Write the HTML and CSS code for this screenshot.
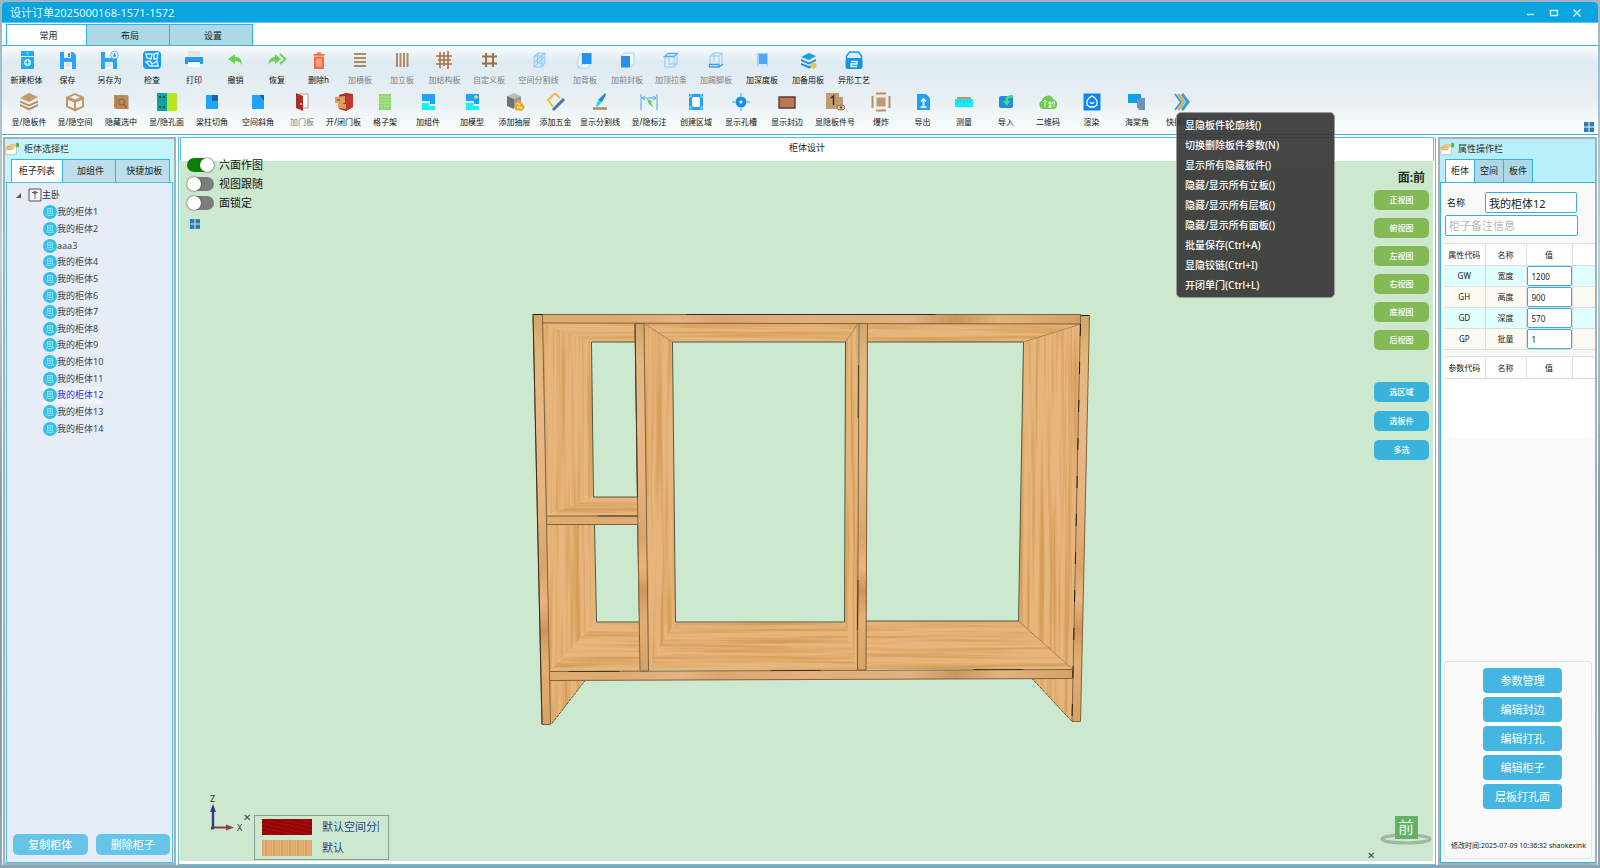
FILE: index.html
```html
<!DOCTYPE html>
<html lang="zh-CN">
<head>
<meta charset="utf-8">
<title>设计订单2025000168-1571-1572</title>
<link rel="stylesheet" href="styles.css">
</head>
<body>
<svg class="defs" aria-hidden="true">
  <defs>
    <symbol id="cab" viewBox="0 0 14 14"><circle cx="7" cy="7" r="7" fill="#35bfe8"/><path d="M4.500 3.500h5v5h-5zM4.500 6h5M7 3.500v5M4.500 8.500l-1 2.500M9.500 8.500l1 2.500M5 10.500h4" fill="none" stroke="#9fe6f9" stroke-width=".8"/></symbol>
    <symbol id="tiles" viewBox="0 0 10 10"><path d="M0 0h4.500v4.500H0zM5.500 0H10v4.500H5.500zM0 5.500h4.500V10H0zM5.500 5.500H10V10H5.500z" fill="#2a7db8"/></symbol>
    <symbol id="note" viewBox="0 0 16 14"><path d="M1 4h11v9H1z" fill="#fff" stroke="#b9c4cc"/><path d="M0 5l5-3 7-1 2 2-3 1-2 3-4 1-5 0z" fill="#efc98c"/><path d="M1 6l6-2M2 8l7-1" stroke="#d9a862" fill="none"/><path d="M12 0l3 1v4h-3z" fill="#47b64c"/></symbol>
  </defs>
</svg>
<div class="window">
  <header class="titlebar">
    <h1>设计订单2025000168-1571-1572</h1>
    <div class="winctl">
      <button aria-label="最小化"><svg viewBox="0 0 10 10"><path d="M1 6.500h7" stroke="#cdeffc" stroke-width="1.500"/></svg></button>
      <button aria-label="最大化"><svg viewBox="0 0 10 10"><path d="M1.500 2.500h7v5h-7z" fill="none" stroke="#cdeffc" stroke-width="1.500"/></svg></button>
      <button aria-label="关闭"><svg viewBox="0 0 10 10"><path d="M1.500 1.500l7 7M8.500 1.500l-7 7" stroke="#cdeffc" stroke-width="1.500"/></svg></button>
    </div>
  </header>
  <nav class="maintabs">
    <button class="on">常用</button><button>布局</button><button>设置</button>
  </nav>
  <section class="ribbon">
    <div class="tools tools-a">
      <button><svg viewBox="0 0 20 20"><path d="M4 1h13v5H4zM4 7h13v12H4z" fill="#1badf8"/><circle cx="10.500" cy="12.500" r="3.500" fill="#c9ecfe"/><path d="M8.500 12.500h4M10.500 10.500v4" stroke="#1badf8"/><path d="M10.500 2v2" stroke="#fff"/></svg>新建柜体</button>
      <button><svg viewBox="0 0 20 20"><path d="M2 2h13l3 3v14H2z" fill="#2aa4f7"/><path d="M6 2h7v6H6zM6 12h8v7H6z" fill="#eef6fb"/><path d="M10 3h2v4h-2z" fill="#2aa4f7"/><path d="M7.500 14h5M7.500 16h5" stroke="#c6d3dc"/></svg>保存</button>
      <button><svg viewBox="0 0 20 20"><path d="M1 2h13l3 3v14H1z" fill="#2aa4f7"/><path d="M5 2h6v6H5zM5 12h8v7H5z" fill="#eef6fb"/><path d="M6.500 14h5M6.500 16h5" stroke="#c6d3dc"/><circle cx="14.500" cy="5" r="3.800" fill="#e7f4fd" stroke="#6bbcf4"/><path d="M14.500 3v4M13 5l1.500 2L16 5" fill="none" stroke="#2aa4f7"/></svg>另存为</button>
      <button><svg viewBox="0 0 20 20"><rect x="1" y="1" width="18" height="18" rx="4" fill="#129dfc"/><path d="M4 4h6l-1 5-4-1zM12 4l4-1-1 6h-3zM4 12l4 4h8l-1-5-5 3-2-3z" fill="none" stroke="#e4f5ff" stroke-width="1.400"/></svg>检查</button>
      <button><svg viewBox="0 0 20 20"><path d="M4 1h12v5H4z" fill="#dfe5ea"/><path d="M1 7h18v7H1z" fill="#2a9bf3"/><path d="M4 12h12v5H4z" fill="#f9fbfd"/><path d="M4 11.500h12" stroke="#1a82d6"/></svg>打印</button>
      <button><svg viewBox="0 0 20 20"><path d="M2 9l7-5v3c5 0 7 3 7 8-2-3-4-4-7-4v3z" fill="#6ccf4e"/></svg>撤销</button>
      <button><svg viewBox="0 0 20 20"><path d="M14 9L8 4v3c-4 0-6 3-7 8 2-3 4-4 7-4v3z" fill="#6ccf4e"/><path d="M13 4l5.500 5-5.500 5" fill="none" stroke="#6ccf4e" stroke-width="1.800"/></svg>恢复</button>
      <button><svg viewBox="0 0 20 20"><path d="M5 6.500h10V19H5zM4.500 4h11v1.800h-11zM8 2.500h4v2H8z" fill="#f8693c"/><path d="M8 8.500v8M10 8.500v8M12 8.500v8" stroke="#fbd5c8"/></svg>删除h</button>
      <button class="dim"><svg viewBox="0 0 20 20"><path d="M4 4h12M4 8h12M4 12h12M4 16h12" stroke="#b48a62" stroke-width="2"/></svg>加横板</button>
      <button class="dim"><svg viewBox="0 0 20 20"><path d="M5 3v14M8.500 3v14M12 3v14M15.500 3v14" stroke="#b48a62" stroke-width="2"/></svg>加立板</button>
      <button class="dim"><svg viewBox="0 0 20 20"><path d="M5 2v16M9 2v14M13 1v18M1 6h16M3 10h13M1 14h16" stroke="#a9713f" stroke-width="1.600"/></svg>加结构板</button>
      <button class="dim"><svg viewBox="0 0 20 20"><path d="M7 3v14M14 3v14M3 6.500h15M3 13.500h15" stroke="#a0703f" stroke-width="2"/></svg>自定义板</button>
      <button class="dim"><svg viewBox="0 0 20 20"><path d="M5 6l4-3h7v10l-3 4H5zM5 6h8v11M13 6l3-3M5 13l8-7M6 16l9-9M9 3l-1 10h8" fill="#cfe7fa" stroke="#8cc8f5"/></svg>空间分割线</button>
      <button class="dim"><svg viewBox="0 0 20 20"><path d="M3 7l4-4v11l-4 4zM3 18h9l4-4" fill="#f3f9fe" stroke="#a9d3f5"/><path d="M7 3h9.500v11H7z" fill="#2590f0"/></svg>加背板</button>
      <button class="dim"><svg viewBox="0 0 20 20"><path d="M4 6l4-3h9v11l-4 3" fill="#f3f9fe" stroke="#a9d3f5"/><path d="M4 6h9v11.500H4z" fill="#2590f0"/></svg>加前封板</button>
      <button class="dim"><svg viewBox="0 0 20 20"><path d="M4 7v10h9V7M8 5v9h8V4M13 17l3-3" fill="none" stroke="#a9d3f5" stroke-width="1.300"/><path d="M3.500 6.500L7 3.500h9.500L13 6.500z" fill="#dff0fd" stroke="#55adf2" stroke-width="1.300"/></svg>加顶拉条</button>
      <button class="dim"><svg viewBox="0 0 20 20"><path d="M4 14V6h9v8M8 12V3h8v11M4 6l4-3M13 6l3-3" fill="none" stroke="#a9d3f5" stroke-width="1.300"/><path d="M3.500 14.500h9.500v2.500H3.500zM13 17l4-3" fill="#dff0fd" stroke="#3a9ff0" stroke-width="1.300"/></svg>加踢脚板</button>
      <button><svg viewBox="0 0 20 20"><path d="M5 3h11v14H5z" fill="#9fcdf5"/><path d="M7 4h8v10H7z" fill="#4fa6f2"/><path d="M5 17l2-3h8l1 3" fill="#d2e8fb"/></svg>加深度板</button>
      <button><svg viewBox="0 0 20 20"><path d="M3 7l8-4 7 3-7 4z" fill="#11a0ef"/><path d="M3 9v2l8 3.500 7-3.500V9l-7 3.500zM3 13v2l8 3.500 4-2v-2l-4 1.500z" fill="#1b92dc"/><circle cx="15.500" cy="15.500" r="3" fill="#edc14a"/></svg>加备用板</button>
      <button><svg viewBox="0 0 20 20"><path d="M2.500 9v-3l3-4h9l3 4v3" fill="#d8eefb" stroke="#1f9ede" stroke-width="1.600"/><rect x="1.500" y="8" width="17" height="11" rx="2.500" fill="#1694dd"/><path d="M7 11.500h6v2.500H7v2.500h6" fill="none" stroke="#e8f7ff" stroke-width="1.300"/></svg>异形工艺</button>
    </div>
    <div class="tools tools-b">
      <button><svg viewBox="0 0 20 20"><path d="M1 6l9-5 9 4-9 5z" fill="#c39a6c"/><path d="M1 8.500l9 4 9-4v2l-9 4-9-4zM1 12l9 4 9-4v2l-9 4.500L1 14z" fill="#b98c5c"/></svg>显/隐板件</button>
      <button><svg viewBox="0 0 20 20"><path d="M1 5l9-4 9 4v10l-9 4.500L1 15z" fill="#c2986b"/><path d="M3 8l6 2.500v6L3 14zM17 8l-6 2.500v6l6-2.500zM10 3l5 2.200-5 2.300-5-2.300z" fill="#f5f2ee"/></svg>显/隐空间</button>
      <button><svg viewBox="0 0 20 20"><path d="M3 3h13a1.500 1.500 0 0 1 1.500 1.500V17H5a2 2 0 0 1-2-2z" fill="#b98a5a"/><circle cx="10.500" cy="10" r="3" fill="none" stroke="#8a5c2e"/><path d="M12.500 12l3 4" stroke="#8a5c2e" stroke-width="1.200"/><path d="M5.500 4v12" stroke="#a67746"/></svg>隐藏选中</button>
      <button><svg viewBox="0 0 20 20"><path d="M0 1h10v18H0z" fill="#0fa3a0"/><path d="M10 1h10v18H10z" fill="#b6e61d"/><path d="M3 4v2M7 4v2M3 14v2M7 14v2" stroke="#124b4a" stroke-width="2"/></svg>显/隐孔面</button>
      <button><svg viewBox="0 0 20 20"><path d="M4 3h12v14H4z" fill="#1ea2fb"/><path d="M10 3h6v6h-6z" fill="#1467aa"/></svg>梁柱切角</button>
      <button><svg viewBox="0 0 20 20"><path d="M4 3h7l5 6v8H4z" fill="#1ea2fb"/><path d="M11 3h5v6z" fill="#1467aa"/></svg>空间斜角</button>
      <button class="dim"><svg viewBox="0 0 20 20"><path d="M7 2h9v14H7z" fill="#fff" stroke="#d98a84"/><path d="M4 1l7 3v15l-7-3z" fill="#a92e28"/><path d="M9 11v2" stroke="#fff"/></svg>加门板</button>
      <button><svg viewBox="0 0 20 20"><path d="M5 3l7-2 7 1v13l-7 4-7-2z" fill="#b22a22"/><path d="M12 5l7-3v13l-7 4z" fill="#c8372d"/><path d="M1 5l10-1v7l-3 1-7-1zM4 12h8v5l-8-1z" fill="#dd9d63"/><path d="M3 8h3" stroke="#7b3a1e"/></svg>开/闭门板</button>
      <button><svg viewBox="0 0 20 20"><path d="M4 2h12v16H4z" fill="#86d263"/><path d="M7 2v16M10 2v16M13 2v16M4 5h12M4 8h12M4 11h12M4 14h12" stroke="#a9e38e"/></svg>格子架</button>
      <button><svg viewBox="0 0 20 20"><path d="M4 2h13v10h-5V9H4z" fill="#1ea2fb"/><path d="M4 11h7v3h6v4H4z" fill="#16f0fb"/></svg>加组件</button>
      <button><svg viewBox="0 0 20 20"><path d="M4 2h13v10h-5V9H4z" fill="#1ea2fb"/><path d="M4 11h7v3h6v4H4z" fill="#16f0fb"/><circle cx="14" cy="5" r="1.800" fill="#f2e42d"/></svg>加模型</button>
      <button><svg viewBox="0 0 20 20"><path d="M2 4l7-3 7 3-7 3z" fill="#bdbdbd"/><path d="M2 4l7 3v10l-7-3z" fill="#707070"/><path d="M9 7l7-3v9l-7 3z" fill="#999"/><path d="M10 10l4-2 6 7-3 4-7-1z" fill="#eda62b"/><path d="M12 11l3 2M12 15l5 1" stroke="#fff0b8" stroke-width="1.400"/></svg>添加抽屉</button>
      <button><svg viewBox="0 0 20 20"><path d="M14 6L9 1.500 2 8l5 7" fill="none" stroke="#f1bd35" stroke-width="2"/><path d="M7 18L18 7" stroke="#4579a6" stroke-width="3"/></svg>添加五金</button>
      <button><svg viewBox="0 0 20 20"><path d="M6 14l2-6 4 2-5 5z" fill="#14dff0"/><path d="M8 8l7-7 1 2-4 7z" fill="#2387db"/><path d="M3 16.500h14" stroke="#b38a67" stroke-width="2.500"/></svg>显示分割线</button>
      <button><svg viewBox="0 0 20 20"><path d="M2 2v16M18 2v16M3 6h14M3 6l3-2M3 6l3 2M17 6l-3-2M17 6l-3 2" fill="none" stroke="#45aef2"/><path d="M8 7l5 2-1 2 3 5-5-4-1-2z" fill="#58cf5a"/></svg>显/隐标注</button>
      <button><svg viewBox="0 0 20 20"><path d="M3 2h14v16H3z" fill="#279ff5"/><path d="M7 5h6l1 1v8l-1 1H7l-1-1V6z" fill="#f2f9fe"/><path d="M5 2v3H3M15 2v3h2M5 18v-3H3M15 18v-3h2" fill="none" stroke="#a8dafb"/></svg>创建区域</button>
      <button><svg viewBox="0 0 20 20"><circle cx="10" cy="10" r="5.500" fill="#168fe6"/><circle cx="10" cy="10" r="1.500" fill="#fff"/><path d="M1 10h3M16 10h3M10 1v3M10 16v3" stroke="#4cc8f8" stroke-width="1.400"/></svg>显示孔槽</button>
      <button><svg viewBox="0 0 20 20"><path d="M2 5h16v11H2z" fill="#b87758" stroke="#5b3d30" stroke-width="1.400"/></svg>显示封边</button>
      <button><svg viewBox="0 0 20 20"><path d="M1 1h13v4h4v12H1z" fill="#c09b6d"/><path d="M6 6l2.500-2v9" fill="none" stroke="#3c2d1f" stroke-width="1.500"/><ellipse cx="16" cy="15.500" rx="4" ry="2.600" fill="#d9c5ab" stroke="#8d6c4c"/><circle cx="16" cy="15.500" r="1.200" fill="#6d5138"/></svg>显隐板件号</button>
      <button><svg viewBox="0 0 20 20"><path d="M5.500 5.500h9v9h-9z" fill="#c09b6d"/><path d="M5 1.500h10M5 18.500h10M1.500 4v12M18.500 4v12" stroke="#b98e60" stroke-width="2"/></svg>爆炸</button>
      <button><svg viewBox="0 0 20 20"><path d="M4 2h9l4 4v12H4z" fill="#1e9ff8"/><path d="M10.500 14V7M8 9.500L10.500 7 13 9.500M7.500 15h6" fill="none" stroke="#fff" stroke-width="1.600"/></svg>导出</button>
      <button><svg viewBox="0 0 20 20"><path d="M3 5h14v3H3z" fill="#bd9468"/><path d="M1 7h18v8H1z" fill="#16ecf8"/><path d="M4 8v3M7 8v2M10 8v3M13 8v2M16 8v3" stroke="#0ebfd6"/></svg>测量</button>
      <button><svg viewBox="0 0 20 20"><rect x="3" y="4" width="14" height="12" rx="2" fill="#1e8fe6"/><path d="M17 3c-6 0-8 2-7 6H7l4 5 3-5h-2c-1-3 1-4 5-3z" fill="#48e16c"/></svg>导入</button>
      <button><svg viewBox="0 0 20 20"><path d="M5 17a4.500 4.500 0 0 1-1-8.500A6 6 0 0 1 15.500 7.500 5 5 0 0 1 16 17z" fill="#6ccb4f"/><path d="M7 15V8M5 10l2-2 2 2M11 10h2v2h-2zM14.500 10h2v2h-2zM11 13.500h2v2h-2zM15 14h2" fill="none" stroke="#e9f9e4"/></svg>二维码</button>
      <button><svg viewBox="0 0 20 20"><path d="M1.500 1.500h17v17h-17z" fill="#0a84fb"/><path d="M7 6l3-2 3 2 2 3v4l-3 2H8l-3-2V9z" fill="none" stroke="#fff" stroke-width="1.300"/><path d="M8 10c1 2 3 2 4 0" fill="none" stroke="#fff" stroke-width="1.300"/></svg>渲染</button>
      <button><svg viewBox="0 0 20 20"><path d="M1 2h13v9H1z" fill="#0aa1ea"/><path d="M10 6h8v12h-6l-2-3z" fill="#6f92c3"/></svg>海棠角</button>
      <button><svg viewBox="0 0 20 20"><path d="M3 2l6 8-6 8" fill="none" stroke="#2aa2f5" stroke-width="2"/><path d="M6 2l6 8-6 8" fill="none" stroke="#e6ac43" stroke-width="2.500"/><path d="M10 2l6 8-6 8" fill="none" stroke="#2aa2f5" stroke-width="3"/></svg>快捷功能</button>
    </div>
    <button class="ribbon-more" aria-label="布局"><svg><use href="#tiles"/></svg></button>
    <menu class="popup">
      <li><button>显隐板件轮廓线()</button></li>
      <li><button>切换删除板件参数(N)</button></li>
      <li><button>显示所有隐藏板件()</button></li>
      <li><button>隐藏/显示所有立板()</button></li>
      <li><button>隐藏/显示所有层板()</button></li>
      <li><button>隐藏/显示所有面板()</button></li>
      <li><button>批量保存(Ctrl+A)</button></li>
      <li><button>显隐铰链(Ctrl+I)</button></li>
      <li><button>开闭单门(Ctrl+L)</button></li>
    </menu>
  </section>
  <main class="work">
    <aside class="panel left">
      <h2 class="panel-title"><svg><use href="#note"/></svg>柜体选择栏</h2>
      <nav class="subtabs"><button class="on">柜子列表</button><button>加组件</button><button>快捷加板</button></nav>
      <div class="left-body">
        <div class="tree-root"><svg class="caret" viewBox="0 0 6 6"><path d="M6 0v6H0z" fill="#555"/></svg><svg class="room" viewBox="0 0 14 14"><path d="M1 1h12v12H1z" fill="#f3f3f3" stroke="#555"/><circle cx="7" cy="4.500" r="1.800" fill="#777"/><path d="M7 4v7M4 4.500h6" stroke="#666"/></svg>主卧</div>
        <ul class="tree">
          <li><svg><use href="#cab"/></svg>我的柜体1</li>
          <li><svg><use href="#cab"/></svg>我的柜体2</li>
          <li><svg><use href="#cab"/></svg>aaa3</li>
          <li><svg><use href="#cab"/></svg>我的柜体4</li>
          <li><svg><use href="#cab"/></svg>我的柜体5</li>
          <li><svg><use href="#cab"/></svg>我的柜体6</li>
          <li><svg><use href="#cab"/></svg>我的柜体7</li>
          <li><svg><use href="#cab"/></svg>我的柜体8</li>
          <li><svg><use href="#cab"/></svg>我的柜体9</li>
          <li><svg><use href="#cab"/></svg>我的柜体10</li>
          <li><svg><use href="#cab"/></svg>我的柜体11</li>
          <li class="sel"><svg><use href="#cab"/></svg>我的柜体12</li>
          <li><svg><use href="#cab"/></svg>我的柜体13</li>
          <li><svg><use href="#cab"/></svg>我的柜体14</li>
        </ul>
        <div class="left-actions"><button>复制柜体</button><button>删除柜子</button></div>
      </div>
    </aside>
    <section class="center">
      <h2 class="center-title">柜体设计</h2>
      <div class="canvas">
        <svg class="scene" viewBox="180 161 1252 700" role="img" aria-label="柜体">
          <defs>
            <filter id="grainV" x="0" y="0" width="1" height="1"><feTurbulence type="fractalNoise" baseFrequency="0.25 0.006" numOctaves="3" seed="4"/><feColorMatrix values="0 0 0 0 .66  0 0 0 0 .34  0 0 0 0 .1  3 0 0 0 -1.250"/><feComposite in2="SourceGraphic" operator="in"/><feMerge><feMergeNode in="SourceGraphic"/><feMergeNode/></feMerge></filter>
            <filter id="grainH" x="0" y="0" width="1" height="1"><feTurbulence type="fractalNoise" baseFrequency="0.006 0.25" numOctaves="3" seed="7"/><feColorMatrix values="0 0 0 0 .66  0 0 0 0 .34  0 0 0 0 .1  3 0 0 0 -1.250"/><feComposite in2="SourceGraphic" operator="in"/><feMerge><feMergeNode in="SourceGraphic"/><feMergeNode/></feMerge></filter>
            <linearGradient id="edgeH"><stop offset="0" stop-color="#dcae6f"/><stop offset=".15" stop-color="#dfaa74"/><stop offset=".25" stop-color="#e6b384"/><stop offset=".33" stop-color="#dba672"/><stop offset=".5" stop-color="#e3b07e"/><stop offset=".58" stop-color="#deb07a"/><stop offset=".68" stop-color="#e3b282"/><stop offset=".77" stop-color="#c99660"/><stop offset=".85" stop-color="#e2b47d"/><stop offset="1" stop-color="#d3a065"/></linearGradient>
            <linearGradient id="edgeV" x2="0" y2="1"><stop offset="0" stop-color="#d3a467"/><stop offset=".1" stop-color="#e0b87b"/><stop offset=".25" stop-color="#e9b787"/><stop offset=".45" stop-color="#e6b482"/><stop offset=".62" stop-color="#d9a56a"/><stop offset=".7" stop-color="#eab67d"/><stop offset=".77" stop-color="#ce955c"/><stop offset=".85" stop-color="#e3af74"/><stop offset="1" stop-color="#d6a266"/></linearGradient>
          </defs>
          <g filter="url(#grainV)" fill="#e8b67c">
            <path d="M542 323L591 341 593 497 545 516zM545 524H594L596 622 549 671zM643 323L672 342 675 622 648 671zM858 323L845 342 844 622 857 670zM1080 324L1023 342 1018 621 1072 669zM549 680H585L551 724zM1031 678H1072L1071 721z"/>
          </g>
          <g filter="url(#grainH)" fill="#e8b67c">
            <path d="M542 323H635V342H591zM593 497H637V516H545zM596 622H639V671H549zM643 323H858L845 342H672zM675 622H844L857 670H648zM867 323H1080L1023 342H867zM865 621H1018L1072 669H865z"/>
          </g>
          <g fill="none" stroke="#9b6e42" stroke-width="1" stroke-opacity=".75">
            <path d="M643 323L672 342M858 323L845 342M1080 324L1023 342M1018 621L1072 669"/>
          </g>
          <g fill="none" stroke="#4f5940" stroke-width="1">
            <path d="M591 342H635L637 497H593zM594 524H637L639 622H596zM672 342H845L844 622H675zM867 342H1023L1018 621H865z"/>
            <path d="M585 680L551 724" stroke-dasharray="3 1"/><path d="M1031 678L1071 721" stroke-dasharray="3 1"/>
          </g>
          <g stroke="#80603b" stroke-width="1">
            <path d="M542 314.500H1080V324L542 323zM549 671.500L1072 669.500V678.500L549 680.500zM545 516H638V524.500H545z" fill="url(#edgeH)"/>
            <path d="M532.500 314.500H542L550 724.500H541.500z" fill="url(#edgeV)"/>
            <path d="M634.500 323.500H643.500L648 671H639.500z" fill="url(#edgeV)"/>
            <path d="M858.500 323.500H867L865.500 670H857z" fill="url(#edgeV)"/>
            <path d="M1080 315.500H1089L1080 721.500H1071.500z" fill="url(#edgeV)"/>
          </g>
          <g fill="none" stroke="#20221a" stroke-width="1">
            <path d="M686 314.500H935M532.500 316L541.500 724" stroke-opacity=".8"/>
            <path d="M634.500 324L637 497M597 516H637M568 671.500H619M770 670.500H820M973 669.500H1023M858 365L857.500 418M857.500 580L857 630" stroke-opacity=".7"/>
            <path d="M1080 324L1071.500 720" stroke-dasharray="12 26"/>
            <path d="M532 314.500H542M1080 315.500H1089"/>
          </g>
        </svg>
        <div class="toggles">
          <label><input type="checkbox" role="switch" checked>六面作图</label>
          <label><input type="checkbox" role="switch">视图跟随</label>
          <label><input type="checkbox" role="switch">面锁定</label>
          <svg><use href="#tiles"/></svg>
        </div>
        <div class="views">
          <strong>面:前</strong>
          <button>正视图</button><button>俯视图</button><button>左视图</button><button>右视图</button><button>底视图</button><button>后视图</button>
          <div class="picks"><button>选区域</button><button>选板件</button><button>多选</button></div>
        </div>
        <div class="corner">
          <svg class="axes" viewBox="0 0 44 44"><path d="M9 33V15" stroke="#38388a" stroke-width="2.400"/><path d="M9 9l3 8H6z" fill="#38388a"/><path d="M9 32.500h14" stroke="#8c3f3f" stroke-width="2"/><path d="M30 32.500l-8-3v6z" fill="#8c3f3f"/><circle cx="8.500" cy="33" r="1.800" fill="#2c5a35"/><text x="6" y="7">Z</text><text x="33" y="36">X</text></svg>
          <button class="close" aria-label="关闭图例">✕</button>
          <dl class="legend"><dt class="red"></dt><dd>默认空间分隔</dd><dt class="wood"></dt><dd>默认</dd></dl>
        </div>
        <div class="compass">
          <svg viewBox="0 0 54 30"><ellipse cx="27" cy="24" rx="24" ry="4" fill="none" stroke="#a3b5a5" stroke-width="3"/><path d="M16 1h23v23H16z" fill="#62b266"/><text x="27" y="18">前</text></svg>
          <button class="close" aria-label="关闭视图方块">✕</button>
        </div>
      </div>
    </section>
    <aside class="panel right">
      <h2 class="panel-title"><svg><use href="#note"/></svg>属性操作栏</h2>
      <nav class="subtabs"><button class="on">柜体</button><button>空间</button><button>板件</button></nav>
      <div class="right-body">
        <div class="name-row"><label for="cname">名称</label><input id="cname" value="我的柜体12"></div>
        <input class="remark" aria-label="柜子备注信息" placeholder="柜子备注信息">
        <table>
          <thead><tr><th>属性代码</th><th>名称</th><th>值</th><th></th></tr></thead>
          <tbody>
            <tr><td>GW</td><td>宽度</td><td><input aria-label="宽度" value="1200"></td><td></td></tr>
            <tr><td>GH</td><td>高度</td><td><input aria-label="高度" value="900"></td><td></td></tr>
            <tr><td>GD</td><td>深度</td><td><input aria-label="深度" value="570"></td><td></td></tr>
            <tr><td>GP</td><td>批量</td><td><input aria-label="批量" value="1"></td><td></td></tr>
          </tbody>
        </table>
        <div class="params"><table><thead><tr><th>参数代码</th><th>名称</th><th>值</th><th></th></tr></thead></table></div>
        <div class="actions">
          <button>参数管理</button><button>编辑封边</button><button>编辑打孔</button><button>编辑柜子</button><button>层板打孔面</button>
          <p>修改时间:2025-07-09 10:36:32 shaokexink</p>
        </div>
      </div>
    </aside>
  </main>
</div>
</body>
</html>
```
FILE: styles.css
```css
* { box-sizing: border-box; }
body {
  margin: 0;
  height: 100vh;
  padding: 2px 2px 3px;
  display: flex;
  background: linear-gradient(180deg, #9fb6c0 0, #a9c4d2 15%, #b8d3e0 30%, #7d9aa8 60%, #8ba4b6 100%);
  font: 9px/12px "Noto Sans", "Noto Sans CJK SC", sans-serif;
  color: #222;
}
button, input { font: inherit; color: inherit; margin: 0; padding: 0; border: 0; background: none; }
button { cursor: pointer; white-space: nowrap; }
h1, h2, p, ul, menu, dl, dd { margin: 0; padding: 0; font-weight: 400; list-style: none; }
svg { display: block; flex: none; }
.defs { position: absolute; width: 0; height: 0; }

.window { flex: 1; min-width: 0; display: flex; flex-direction: column; background: #fff; border-radius: 4px 4px 0 0; }

.titlebar { display: flex; align-items: center; justify-content: space-between; height: 21px; padding: 2px 10px 0 8px; background: #0aa4de; border-bottom: 1px solid #5cc3ea; border-radius: 4px 4px 0 0; color: #e4f6fd; }
.titlebar h1 { font-size: 11px; line-height: 18px; }
.winctl { display: flex; }
.winctl button { width: 23px; height: 18px; display: grid; place-items: center; }
.winctl svg { width: 10px; height: 10px; }

.maintabs { display: flex; height: 22px; padding: 1px 4px 0; }
.maintabs button { width: 83px; height: 21px; padding: 1px 0 0 4px; border: 1px solid #2fb4e4; border-bottom: 0; border-left-width: 0; background: #add8e6; }
.maintabs .on { width: 81px; border-left-width: 1px; background: #fff; }

.ribbon { position: relative; height: 90px; padding: 4px; display: flex; flex-direction: column; gap: 6px; border-top: 1px solid #36aeda; border-bottom: 1px solid #36aeda; background: linear-gradient(180deg, #fbfcfd 0, #deebf2 18%, #e7eff3 60%, #fcfefe 100%); }
.tools { display: grid; }
.tools-a { grid-template-columns: 41px 41px 43px 42px 42px 41px 42px 41px 42px 42px 43px 46px 53px 40px 44px 44px 46px 46px 46px 46px; }
.tools-b { grid-template-columns: 46px 46px 46px 45px 46px 46px 42px 41px 42px 44px 44px 41px 41px 48px 50px 44px 46px 46px 50px 42px 41px 42px 42px 42px 45px 46px 44px; }
.tools button { display: flex; flex-direction: column; align-items: center; gap: 4px; font-size: 8px; line-height: 12px; color: #111; }
.tools svg { width: 20px; height: 20px; }
.tools .dim { color: #7d7d7d; }
.ribbon-more { position: absolute; right: 4px; bottom: 2px; }
.ribbon-more svg { width: 10px; height: 10px; }

.popup { position: absolute; z-index: 5; left: 1174px; top: 66px; width: 159px; padding: 2px 8px 2px; border: 1px solid #9b9b9b; border-radius: 5px; background: rgba(54, 54, 54, .92); }
.popup button { display: block; width: 100%; text-align: left; font-size: 10px; line-height: 20px; font-weight: 500; color: #fff; }

.work { flex: 1; min-height: 0; display: flex; gap: 2px; padding: 2px 1px 0; }
.panel { display: flex; flex-direction: column; border: 2px solid #a9b0b4; background: #c5f5fc; }
.panel-title { display: flex; align-items: center; gap: 4px; height: 20px; font-size: 9px; color: #333; }
.panel-title svg { width: 15px; height: 14px; }
.subtabs { display: flex; height: 23px; padding-left: 6px; }
.subtabs button { border: 1px solid #2fb4e4; border-left-width: 0; border-bottom: 0; background: #add8e6; flex: 1; }
.subtabs .on { border-left-width: 1px; background: #fff; }

.left { width: 173px; }
.left .subtabs { padding-right: 4px; }
.left .subtabs button { background: #bcdfeb; padding-left: 3px; }
.left .subtabs .on { background: #fff; padding-left: 0; }
.left-body { flex: 1; display: flex; flex-direction: column; margin: 0 1px; border: 1px solid #4cc1ea; background: #e6edf6; }
.tree-root { display: flex; align-items: center; padding: 3px 0 0 9px; height: 21px; color: #333; }
.caret { width: 5px; height: 5px; }
.room { width: 14px; height: 14px; margin-left: 7px; }
.tree { display: grid; grid-auto-rows: 1fr; height: 233px; padding-left: 36px; color: #444; justify-items: start; }
.tree li { display: flex; align-items: center; }
.tree svg { width: 14px; height: 14px; }
.tree .sel { color: #2f2ff0; background: #f3f3f3; }
.left-actions { display: flex; gap: 8px; margin-top: auto; padding: 0 2px 7px 6px; }
.left-actions button { flex: 1; height: 21px; border-radius: 5px; background: #66c4e9; color: #fff; font-size: 11px; }

.center { flex: 1; min-width: 0; display: flex; flex-direction: column; padding: 0 1px 3px 0; border: 1px solid #59bfe6; border-top: 0; }
.center-title { height: 24px; margin-left: 1px; border: 1px solid #59bfe6; border-bottom: 0; text-align: center; font-size: 9px; line-height: 20px; }
.canvas { position: relative; flex: 1; display: flex; background: #cce8cf; margin: 0 1px; }
.scene { position: absolute; width: 100%; height: 100%; }
.toggles { position: absolute; left: 7px; top: -4px; display: flex; flex-direction: column; gap: 3px; }
.toggles label { display: flex; align-items: center; gap: 5px; height: 16px; font-size: 11px; line-height: 16px; color: #111; }
.toggles input { appearance: none; width: 27px; height: 14px; border-radius: 7px; background: #7c7c7c; display: flex; align-items: center; }
.toggles input::before { content: ""; width: 14px; height: 14px; border-radius: 50%; background: #fff; box-shadow: 0 0 2px #333; }
.toggles input:checked { background: #0a800a; justify-content: flex-end; }
.toggles > svg { width: 10px; height: 10px; margin: 5px 0 0 3px; }

.views { position: relative; margin-left: auto; padding: 9px 4px 0 0; display: flex; flex-direction: column; gap: 8px; }
.views strong { font-size: 12px; line-height: 16px; text-align: right; padding-right: 4px; color: #1c2a1e; margin-bottom: -4px; }
.views button { width: 55px; height: 20px; border-radius: 5px; background: #84ba56; color: #fff; font-size: 8px; font-weight: 500; }
.picks { display: flex; flex-direction: column; gap: 9px; padding-top: 24px; }
.picks button { background: #3ab3dc; }

.close { font-size: 10px; line-height: 10px; color: #444; }
.corner { position: absolute; left: 24px; bottom: 1px; display: flex; align-items: flex-start; }
.axes { width: 44px; height: 44px; margin-top: -20px; }
.axes, .compass svg { overflow: visible; }
.axes text { font-size: 9px; fill: #333; }
.corner .close { margin: -3px 3px 0 -5px; }
.legend { display: grid; grid-template-columns: 50px 57px; grid-auto-rows: 16px; gap: 5px 10px; width: 135px; height: 45px; padding: 3px 7px; border: 1px solid #8b9c93; }
.legend dt.red { background: repeating-linear-gradient(12deg, #900508 0 2px, #a3080a 2px 4px); }
.legend dt.wood { background: repeating-linear-gradient(90deg, #dfa86b 0 2px, #e8b97e 2px 3px, #d79f61 3px 5px, #e3b074 5px 8px); }
.legend dd { overflow: hidden; white-space: nowrap; font-size: 11px; line-height: 16px; color: #26427f; }
.compass { position: absolute; right: 0; bottom: 0; display: flex; flex-direction: column; }
.compass svg { width: 54px; height: 30px; }
.compass text { font-size: 16px; fill: #e6f6e6; text-anchor: middle; }
.compass .close { align-self: flex-start; margin-left: -12px; padding: 5px 0 1px; }

.right { width: 159px; background: #b8effb; }
.right .panel-title { gap: 3px; }
.right .subtabs { padding: 0 62px 0 5px; }
.right-body { flex: 1; display: flex; flex-direction: column; border: 1px solid #2fb4e4; border-width: 1px 0 1px 1px; background: #f9f9f9; padding: 9px 0 3px 3px; }
.right-body input { border: 1px solid #3aaedb; border-radius: 2px; background: #fff; }
.name-row { display: flex; align-items: center; padding: 0 18px 0 3px; }
.name-row label { width: 38px; flex: none; }
.name-row input { flex: 1; min-width: 0; height: 21px; padding: 0 3px; font-size: 11px; }
.right-body .remark { height: 21px; margin: 2px 17px 7px 1px; padding: 0 3px; font-size: 11px; }
.remark::placeholder { color: #b7b7b7; opacity: 1; }
table { width: 100%; table-layout: fixed; border-collapse: collapse; border-top: 1px solid #ddd; background: #fff; font-size: 8px; text-align: center; }
th, td { padding: 0; border-right: 1px solid #ddd; border-bottom: 1px solid #ddd; font-weight: 400; }
th { height: 22px; }
td { height: 21px; font-size: 8px; }
th:nth-child(1), th:nth-child(2) { width: 41px; }
th:nth-child(3) { width: 46px; }
th:last-child, td:last-child { border-right: 0; }
tbody tr:nth-child(odd) { background: #e0ffff; }
tbody tr:nth-child(even) { background: #faf9f2; }
td input { display: block; width: 100%; height: 20px; padding: 0 4px; }
.params { height: 82px; margin-top: 6px; background: #fff; }
.actions { margin: auto 3px 0 0; height: 198px; padding: 6px 0 7px 9px; display: flex; flex-direction: column; align-items: center; gap: 4px; border: 1px solid #dde6ec; border-radius: 3px; }
.actions button { width: 79px; height: 25px; border-radius: 4px; background: #45b6e2; color: #fff; font-size: 11px; }
.actions p { margin: auto 0 0 -8px; font-size: 7px; line-height: 10px; white-space: nowrap; }
```
